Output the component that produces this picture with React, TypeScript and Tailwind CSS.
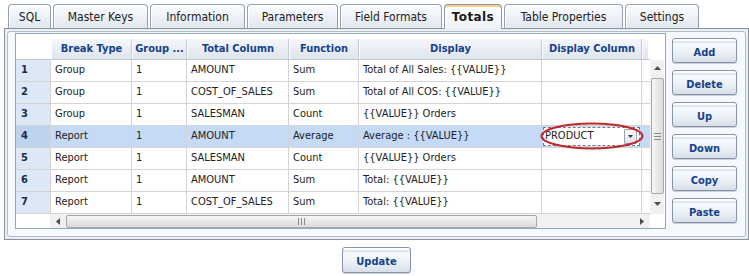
import React from 'react';

const tabs = [
  { label: 'SQL', w: 'w-[43px]' },
  { label: 'Master Keys', w: 'w-[95px]' },
  { label: 'Information', w: 'w-[95px]' },
  { label: 'Parameters', w: 'w-[91px]' },
  { label: 'Field Formats', w: 'w-[102px]' },
  { label: 'Totals', w: 'w-[58px]', active: true },
  { label: 'Table Properties', w: 'w-[119px]' },
  { label: 'Settings', w: 'w-[74px]' },
];

const columns = [
  { label: 'Break Type', w: 'w-[81px]' },
  { label: 'Group ...', w: 'w-[55px]' },
  { label: 'Total Column', w: 'w-[102px]' },
  { label: 'Function', w: 'w-[70px]' },
  { label: 'Display', w: 'w-[183px]' },
  { label: 'Display Column', w: 'w-[100px]' },
];

const rows = [
  ['Group', '1', 'AMOUNT', 'Sum', 'Total of All Sales: {{VALUE}}', ''],
  ['Group', '1', 'COST_OF_SALES', 'Sum', 'Total of All COS: {{VALUE}}', ''],
  ['Group', '1', 'SALESMAN', 'Count', '{{VALUE}} Orders', ''],
  ['Report', '1', 'AMOUNT', 'Average', 'Average : {{VALUE}}', 'PRODUCT'],
  ['Report', '1', 'SALESMAN', 'Count', '{{VALUE}} Orders', ''],
  ['Report', '1', 'AMOUNT', 'Sum', 'Total: {{VALUE}}', ''],
  ['Report', '1', 'COST_OF_SALES', 'Sum', 'Total: {{VALUE}}', ''],
];

const buttons = ['Add', 'Delete', 'Up', 'Down', 'Copy', 'Paste'];

const font = "font-['DejaVu_Sans_Condensed','DejaVu_Sans',sans-serif]";

function Btn({ label, w, h }: { label: string; w: string; h: string }) {
  return (
    <button
      className={`${w} ${h} rounded-[3px] border border-[#8593a6] bg-[linear-gradient(#ffffff_0%,#ffffff_8%,#dde8f5_10%,#dde8f5_16%,#f8fafd_20%,#eef2f7_55%,#d8dfe9_100%)] text-[11px] font-bold text-[#15428b] shadow-[0_1px_0_#c9d0da] flex items-center justify-center pt-[5px]`}
    >
      {label}
    </button>
  );
}

function Tri({ dir }: { dir: 'up' | 'down' | 'left' | 'right' }) {
  const pts = {
    up: '0,4 3.5,0 7,4',
    down: '0,0 7,0 3.5,4',
    left: '4,0 4,7 0,3.5',
    right: '0,0 0,7 4,3.5',
  }[dir];
  const vertical = dir === 'up' || dir === 'down';
  return (
    <svg width={vertical ? 7 : 4} height={vertical ? 4 : 7} viewBox={vertical ? '0 0 7 4' : '0 0 4 7'}>
      <polygon points={pts} fill="#4d4d4d" />
    </svg>
  );
}

export default function App() {
  return (
    <div className={`w-[749px] h-[276px] bg-white ${font} text-[11px] text-[#222]`}>
      {/* Tabs */}
      <div className="flex gap-[2px] pl-[8px] pt-[4px]">
        {tabs.map(t =>
          t.active ? (
            <div
              key={t.label}
              className={`${t.w} h-[25px] -mb-px relative z-10 rounded-t-[4px] border border-b-0 border-[#8d99aa] bg-[linear-gradient(#ffffff,#eef2f8)] shadow-[inset_0_2px_0_#f6cf82,inset_1px_0_0_#fff] flex items-center justify-center font-['DejaVu_Sans',sans-serif] text-[12px] font-bold tracking-[0.4px] text-[#1a1a1a]`}
            >
              {t.label}
            </div>
          ) : (
            <div
              key={t.label}
              className={`${t.w} h-[24px] rounded-t-[4px] border border-b-0 border-[#95a1b1] bg-[linear-gradient(#fbfcfe,#e1e7ef)] shadow-[inset_1px_1px_0_#fff] flex items-center justify-center text-[12px] text-[#222]`}
            >
              {t.label}
            </div>
          )
        )}
      </div>

      {/* Panel */}
      <div className="ml-[4px] w-[745px] h-[212px] border border-[#8b929c] bg-[#eaeff6] p-[2px]">
        <div className="h-full rounded-[3px] border border-[#b4bdc9] bg-[#f5f8fc] flex pl-[7px] pt-[1px] gap-[6px]">
          {/* Grid */}
          <div className="relative w-[651px] h-[196px] border border-[#8ea8c8] bg-white flex flex-col">
            <div className="h-[5px] bg-white" />
            <div className="flex">
              <div className="w-[634px]">
                {/* Header */}
                <div className="flex h-[21px] border-b border-[#c3c9d3]">
                  <div className="w-[35px] bg-white" />
                  {columns.map(c => (
                    <div
                      key={c.label}
                      className={`${c.w} border-r border-[#c3c9d3] border-l border-l-white bg-[linear-gradient(#f4f6fa,#dfe5ed)] flex items-center justify-center font-bold text-[#15428b] whitespace-nowrap overflow-hidden`}
                    >
                      {c.label}
                    </div>
                  ))}
                  <div className="w-[6px] bg-[linear-gradient(#f4f6fa,#dfe5ed)] border-l border-l-white" />
                </div>
                {/* Rows */}
                {rows.map((r, i) => {
                  const sel = i === 3;
                  return (
                    <div key={i} className={`flex h-[22px] border-b border-[#d4d4d4] ${sel ? 'bg-[#c4daf6]' : 'bg-white'}`}>
                      <div
                        className={`w-[35px] border-r border-[#d4d4d4] ${sel ? 'bg-[#bed3ee]' : 'bg-[#dde8f6]'} flex items-center pl-[5px] font-bold text-[#1b2b4b]`}
                      >
                        {i + 1}
                      </div>
                      {r.map((v, j) => (
                        <div
                          key={j}
                          className={`${columns[j].w} border-r border-[#d4d4d4] flex items-center pl-[4px] whitespace-nowrap overflow-hidden`}
                        >
                          {j === 5 && v ? (
                            <div className="w-[97px] h-[19px] -ml-[3px] border border-dashed border-[#7a7a7a] bg-white flex items-center justify-between pl-[1px] pr-[2px]">
                              <span>{v}</span>
                              <span className="w-[13px] h-[15px] border border-[#9aa3ae] rounded-[1px] bg-[linear-gradient(#fafafa,#dfe3e8)] flex items-center justify-center">
                                <svg width="5" height="3" viewBox="0 0 5 3">
                                  <polygon points="0,0 5,0 2.5,3" fill="#333" />
                                </svg>
                              </span>
                            </div>
                          ) : (
                            v
                          )}
                        </div>
                      ))}
                    </div>
                  );
                })}
              </div>
              {/* Vertical scrollbar */}
              <div className="w-[15px] flex flex-col">
                <div className="h-[21px] bg-white" />
                <div className="h-[154px] w-[14px] bg-[#f1f1f1] flex flex-col items-center">
                  <div className="h-[16px] flex items-center justify-center">
                    <Tri dir="up" />
                  </div>
                  <div className="w-[13px] h-[116px] mt-[2px] rounded-[2px] border border-[#a7a7a7] bg-[linear-gradient(to_right,#f6f6f6,#dcdcdc)] flex flex-col items-center justify-center gap-[2px]">
                    <div className="w-[7px] h-px bg-[#8a8a8a]" />
                    <div className="w-[7px] h-px bg-[#8a8a8a]" />
                    <div className="w-[7px] h-px bg-[#8a8a8a]" />
                  </div>
                  <div className="flex-1 flex items-center justify-center">
                    <Tri dir="down" />
                  </div>
                </div>
              </div>
            </div>
            {/* Horizontal scrollbar */}
            <div className="flex h-[14px]">
              <div className="w-[34px] bg-white" />
              <div className="w-[600px] bg-[#f1f1f1] flex items-center">
                <div className="w-[16px] flex items-center justify-center">
                  <Tri dir="left" />
                </div>
                <div className="w-[471px] h-[13px] rounded-[2px] border border-[#a7a7a7] bg-[linear-gradient(#f6f6f6,#dcdcdc)] flex items-center justify-center gap-[2px]">
                  <div className="w-px h-[7px] bg-[#8a8a8a]" />
                  <div className="w-px h-[7px] bg-[#8a8a8a]" />
                  <div className="w-px h-[7px] bg-[#8a8a8a]" />
                </div>
                <div className="flex-1 flex items-center justify-end pr-[6px]">
                  <Tri dir="right" />
                </div>
              </div>
              <div className="w-[15px] bg-white" />
            </div>

            {/* Annotation ring around the dropdown */}
            <svg className="absolute left-[524px] top-[88px] pointer-events-none" width="104" height="28" viewBox="0 0 104 28">
              <ellipse cx="52" cy="14" rx="50.5" ry="12.5" fill="none" stroke="#c1272d" strokeWidth="2" />
            </svg>
          </div>

          {/* Buttons */}
          <div className="flex flex-col gap-[7px] mt-[5px]">
            {buttons.map(b => (
              <Btn key={b} label={b} w="w-[65px]" h="h-[25px]" />
            ))}
          </div>
        </div>
      </div>

      {/* Update */}
      <div className="flex justify-center pl-[4px] mt-[7px]">
        <Btn label="Update" w="w-[69px]" h="h-[26px]" />
      </div>
    </div>
  );
}
